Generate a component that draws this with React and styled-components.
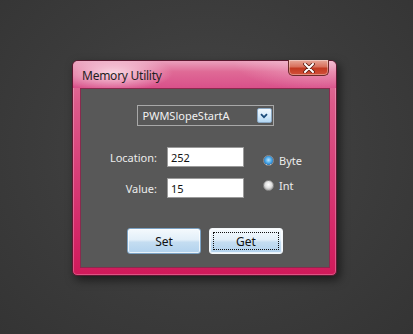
import React, { useState } from 'react';
import styled, { createGlobalStyle, css } from 'styled-components';

const Global = createGlobalStyle`
  html, body {
    margin: 0;
    padding: 0;
    background: #3b3b3b;
    font-family: "Noto Sans", "DejaVu Sans", sans-serif;
  }
`;

const Desk = styled.div`
  width: 413px;
  height: 334px;
  background: radial-gradient(ellipse at 50% 45%, #474747 0%, #3c3c3c 55%, #343434 100%);
  padding: 60px 0 0 72px;
  box-sizing: border-box;
  overflow: hidden;
`;

const Frame = styled.div`
  width: 265px;
  height: 216px;
  border-radius: 6px 6px 5px 5px;
  background: linear-gradient(180deg, #e07aa0 0%, #dc5a8a 20%, #d84079 50%, #d42465 85%, #d01a5a 100%);
  border: 1px solid #5a1830;
  box-sizing: border-box;
  box-shadow: 0 0 0 1px rgba(255,255,255,0.25) inset, 3px 4px 10px rgba(0,0,0,0.55);
  display: flex;
  flex-direction: column;
`;

const TitleBar = styled.div`
  height: 27px;
  display: flex;
  align-items: flex-start;
  justify-content: space-between;
  padding-left: 9px;
  border-radius: 5px 5px 0 0;
  background:
    radial-gradient(ellipse 60px 18px at 40px 12px, rgba(255,235,242,0.85), rgba(255,235,242,0) 100%),
    radial-gradient(ellipse 90px 30px at 250px 0px, rgba(255,220,232,0.5), rgba(255,220,232,0) 100%),
    linear-gradient(180deg, #eaa0bc 0%, #df6a96 40%, #d9508a 100%);
`;

const Title = styled.span`
  font-size: 12px;
  color: #1e1e1e;
  margin-top: 6px;
  letter-spacing: -0.25px;
`;

const CloseButton = styled.div`
  width: 41px;
  height: 16px;
  margin-top: -1px;
  margin-right: 7px;
  border: 1px solid #6b2a2a;
  border-top: none;
  border-radius: 0 0 5px 5px;
  box-sizing: border-box;
  background: linear-gradient(180deg, #e8a89a 0%, #d8705c 45%, #c23a22 55%, #d2503a 100%);
  box-shadow: inset 0 0 0 1px rgba(255,255,255,0.35);
  display: flex;
  align-items: center;
  justify-content: center;
`;

const Client = styled.div`
  flex: 1;
  margin: 0 6px 7px 7px;
  background: #585858;
  border: 1px solid #8a2a4e;
  box-sizing: border-box;
  display: flex;
  flex-direction: column;
  align-items: center;
  padding-top: 16px;
`;

const Combo = styled.div`
  width: 137px;
  height: 21px;
  border: 1px solid #a8a8a8;
  box-sizing: border-box;
  display: flex;
  align-items: center;
  justify-content: space-between;
  padding: 0 1px 0 5px;
  color: #f2f2f2;
  font-size: 11px;
`;

const ComboArrow = styled.div`
  width: 15px;
  height: 15px;
  border: 1px solid #8aa8c4;
  border-radius: 2px;
  box-sizing: border-box;
  background: linear-gradient(180deg, #f2f8fd 0%, #d8ecfb 50%, #b4d8f4 100%);
  display: flex;
  align-items: center;
  justify-content: center;
`;

const Form = styled.div`
  align-self: flex-start;
  display: grid;
  grid-template-columns: 86px 77px 30px auto;
  grid-auto-rows: 20px;
  row-gap: 11px;
  align-items: center;
  margin-top: 21px;
`;

const Label = styled.span`
  font-size: 11px;
  color: #ececec;
  text-align: right;
  padding-right: 10px;
`;

const Input = styled.div`
  height: 20px;
  width: 77px;
  background: #ffffff;
  border: 1px solid #9a9a9a;
  box-sizing: border-box;
  font-size: 11px;
  color: #111;
  padding-left: 3px;
  display: flex;
  align-items: center;
`;

const RadioDot = styled.span`
  width: 11px;
  height: 11px;
  border-radius: 50%;
  justify-self: end;
  box-sizing: border-box;
  border: 1px solid #8a8a8a;
  ${p => p.checked ? css`
    background: radial-gradient(circle at 50% 45%, #bfe6ff 0%, #4aa8e8 45%, #2a7cc4 70%, #d8e8f4 72%, #f0f0f0 100%);
  ` : css`
    background: radial-gradient(circle at 50% 40%, #ffffff 0%, #e0e0e0 45%, #b8b8b8 70%, #eaeaea 100%);
  `}
  transform: translateY(${p => p.shift}px);
`;

const RadioText = styled.span`
  font-size: 11px;
  color: #ececec;
  padding-left: 5px;
  transform: translateY(${p => p.shift}px);
`;

const Buttons = styled.div`
  display: flex;
  gap: 8px;
  margin-top: 30px;
`;

const Button = styled.button`
  width: 74px;
  height: 26px;
  border-radius: 3px;
  border: 1px solid ${p => p.focused ? '#f4f8fb' : '#7ba2c4'};
  box-sizing: border-box;
  background: linear-gradient(180deg, #f4f9fd 0%, #e2eff9 45%, #c4ddf1 55%, #b2d2ee 100%);
  box-shadow: inset 0 0 0 1px rgba(255,255,255,0.7);
  font-family: "Noto Sans", "DejaVu Sans", sans-serif;
  font-size: 12px;
  color: #111;
  padding: 0;
  position: relative;
  ${p => p.focused && css`
    &::after {
      content: '';
      position: absolute;
      inset: 3px;
      border: 1px dotted #111;
    }
  `}
`;

export default function App() {
  const [size, setSize] = useState('byte');
  return (
    <>
      <Global />
      <Desk>
        <Frame>
          <TitleBar>
            <Title>Memory Utility</Title>
            <CloseButton>
              <svg width="12" height="10" viewBox="0 0 12 10">
                <path d="M2 1 L10 9 M10 1 L2 9" stroke="#5a1a10" strokeWidth="3.6" strokeLinecap="round" />
                <path d="M2 1 L10 9 M10 1 L2 9" stroke="#ffffff" strokeWidth="2" strokeLinecap="round" />
              </svg>
            </CloseButton>
          </TitleBar>
          <Client>
            <Combo>
              <span>PWMSlopeStartA</span>
              <ComboArrow>
                <svg width="8" height="6" viewBox="0 0 8 6">
                  <path d="M1 1.2 L4 4.2 L7 1.2" fill="none" stroke="#1d4c7a" strokeWidth="1.8" />
                </svg>
              </ComboArrow>
            </Combo>
            <Form>
              <Label>Location:</Label>
              <Input>252</Input>
              <RadioDot checked={size === 'byte'} shift={3} onClick={() => setSize('byte')} />
              <RadioText shift={3}>Byte</RadioText>
              <Label>Value:</Label>
              <Input>15</Input>
              <RadioDot checked={size === 'int'} shift={-3} onClick={() => setSize('int')} />
              <RadioText shift={-3}>Int</RadioText>
            </Form>
            <Buttons>
              <Button>Set</Button>
              <Button focused>Get</Button>
            </Buttons>
          </Client>
        </Frame>
      </Desk>
    </>
  );
}
